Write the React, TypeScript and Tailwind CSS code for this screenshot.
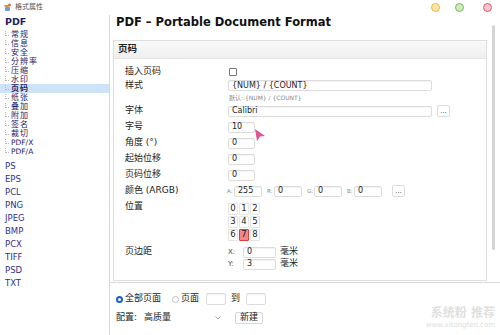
// Format properties dialog — PDF page-number settings.

const PDF_CHILDREN = ['常规', '信息', '安全', '分辨率', '压缩', '水印', '页码', '纸张', '叠加', '附加', '签名', '裁切', 'PDF/X', 'PDF/A'];
const FORMATS = ['PS', 'EPS', 'PCL', 'PNG', 'JPEG', 'BMP', 'PCX', 'TIFF', 'PSD', 'TXT'];

function Input({ value = '', className = '' }: { value?: string; className?: string }) {
  return (
    <div
      className={`h-[11px] border border-[#dcdcdc] rounded-[2px] bg-white shadow-[inset_0_1px_1px_rgba(0,0,0,0.05)] flex items-center pl-[3px] text-[8px] leading-none text-[#222] ${className}`}
    >
      {value}
    </div>
  );
}

function Dots() {
  return (
    <div className="w-[13px] h-[12px] border border-[#dcdcdc] rounded-[2px] bg-white flex items-center justify-center text-[7px] leading-none text-[#444]">
      ...
    </div>
  );
}

function Row({ label, h, children }: { label: string; h: string; children?: React.ReactNode }) {
  return (
    <div className={`flex items-center ${h}`}>
      <span className="w-[103px] shrink-0">{label}</span>
      {children}
    </div>
  );
}

export default function App() {
  return (
    <div className="w-[500px] h-[335px] bg-white relative overflow-hidden font-['DejaVu_Sans','Noto_Sans_CJK_SC',sans-serif] text-[#222]">
      {/* title bar */}
      <div className="h-[15px] flex items-center pl-[3px]">
        <svg width="9" height="9" viewBox="0 0 9 9">
          <path d="M1 2h4l1 2H2z" fill="#c9a13a" />
          <rect x="2" y="4" width="5" height="4" rx="1" fill="#7a9bd0" />
          <circle cx="6.5" cy="2" r="1.5" fill="#e06a3a" />
        </svg>
        <span className="ml-[3px] text-[7px] text-[#555]">格式属性</span>
        <span className="flex-1" />
        <span className="w-[9px] h-[9px] rounded-full bg-[#fbe6a8] border border-[#e2b84a]" />
        <span className="w-[9px] h-[9px] rounded-full bg-[#cfe8bf] border border-[#79b865] ml-[15px]" />
        <span className="w-[9px] h-[9px] rounded-full bg-[#f9c6cf] border border-[#e0536b] ml-[19px] mr-[8px]" />
      </div>

      <div className="flex h-[320px]">
        {/* tree */}
        <div className="w-[110px] shrink-0 border-r border-[#d9d9d9] text-[#1e2266]">
          <div className="h-[15px] flex items-center pl-[5px] text-[9.5px] font-bold">PDF</div>
          {PDF_CHILDREN.map((c) => (
            <div
              key={c}
              className={`h-[9px] flex items-center text-[8px] leading-none overflow-hidden ${c === '页码' ? 'bg-[#cfe3f8] font-bold' : ''}`}
            >
              <span className="w-[4px] h-[5px] ml-[5px] mr-[2px] border-l border-b border-dotted border-[#b8b8b8] -mt-[3px]" />
              <span className={c.startsWith('PDF') ? 'text-[7.5px]' : 'tracking-[1px]'}>{c}</span>
            </div>
          ))}
          <div className="mt-[4px]">
            {FORMATS.map((f) => (
              <div key={f} className="h-[13px] flex items-center pl-[5px] text-[8.5px] text-[#2d3190]">
                {f}
              </div>
            ))}
          </div>
        </div>

        {/* settings */}
        <div className="flex-1 flex flex-col">
          <div className="h-[268px] border-b border-[#d9d9d9] flex">
            <div className="flex-1">
              <div className="h-[25px] pl-[6px] text-[11.5px] leading-[14px] font-bold text-[#111]">
                PDF – Portable Document Format
              </div>
              <div className="ml-[3px] w-[374px] h-[241px] border border-[#dedede]">
                <div className="h-[18px] bg-gradient-to-b from-[#fafafa] to-[#efefef] border-b border-[#e6e6e6] flex items-center pl-[4px] text-[9.5px] font-bold">
                  页码
                </div>
                <div className="pl-[11px] pt-[6px] text-[9px]">
                  <Row label="插入页码" h="h-[14px]">
                    <span className="w-[8px] h-[8px] border border-[#777] rounded-[1px] bg-white ml-[1px]" />
                  </Row>
                  <Row label="样式" h="h-[13px]">
                    <Input value="{NUM} / {COUNT}" className="w-[204px]" />
                  </Row>
                  <div className="h-[11px] pl-[104px] text-[6px] text-[#888] flex items-center">默认: {'{NUM} / {COUNT}'}</div>
                  <Row label="字体" h="h-[16px]">
                    <Input value="Calibri" className="w-[204px]" />
                    <span className="ml-[5px]">
                      <Dots />
                    </span>
                  </Row>
                  <Row label="字号" h="h-[16px]">
                    <Input value="10" className="w-[27px]" />
                  </Row>
                  <Row label="角度 (°)" h="h-[16px]">
                    <Input value="0" className="w-[27px]" />
                  </Row>
                  <Row label="起始位移" h="h-[16px]">
                    <Input value="0" className="w-[27px]" />
                  </Row>
                  <Row label="页码位移" h="h-[16px]">
                    <Input value="0" className="w-[27px]" />
                  </Row>
                  <Row label="颜色 (ARGB)" h="h-[16px]">
                    <div className="flex items-center gap-[5px] -ml-[1px]">
                      {[
                        ['A:', '255'],
                        ['R:', '0'],
                        ['G:', '0'],
                        ['B:', '0'],
                      ].map(([l, v]) => (
                        <div key={l} className="flex items-center">
                          <span className="w-[7px] text-[5.5px] text-[#888]">{l}</span>
                          <Input value={v} className="w-[28px]" />
                        </div>
                      ))}
                      <span className="ml-[5px]">
                        <Dots />
                      </span>
                    </div>
                  </Row>
                  <div className="flex h-[47px]">
                    <span className="w-[103px] h-[16px] flex items-center">位置</span>
                    <div className="pt-[3px] grid grid-cols-[repeat(3,10px)] gap-x-[1px] auto-rows-[13px] text-[8.5px]">
                      {[0, 1, 2, 3, 4, 5, 6, 7, 8].map((n) => (
                        <div key={n} className="flex items-center justify-center">
                          <span
                            className={`w-[10px] h-[12px] rounded-[1px] flex items-center justify-center border ${
                              n === 7 ? 'bg-[#f08888] border-[#e23b3b]' : 'border-[#e4e4e4]'
                            }`}
                          >
                            {n}
                          </span>
                        </div>
                      ))}
                    </div>
                  </div>
                  <div className="flex">
                    <span className="w-[103px] h-[12px] flex items-center">页边距</span>
                    <div>
                      {[
                        ['X:', '0'],
                        ['Y:', '3'],
                      ].map(([l, v]) => (
                        <div key={l} className="h-[12px] flex items-center">
                          <span className="w-[15px] text-[7px] text-[#444]">{l}</span>
                          <Input value={v} className="w-[33px] h-[10px]" />
                          <span className="ml-[4px]">毫米</span>
                        </div>
                      ))}
                    </div>
                  </div>
                </div>
              </div>
            </div>
            {/* scrollbar */}
            <div className="w-[13px] pt-[10px] flex justify-center">
              <div className="w-[3px] h-[225px] bg-[#d4d4d4] rounded-full" />
            </div>
          </div>

          {/* bottom */}
          <div className="pl-[6px] pt-[9px] text-[9px]">
            <div className="h-[14px] flex items-center">
              <span className="w-[7px] h-[7px] rounded-full border-[2px] border-[#1f5fcf] bg-white" />
              <span className="ml-[2px]">全部页面</span>
              <span className="w-[7px] h-[7px] rounded-full border border-[#bdbdbd] ml-[11px]" />
              <span className="ml-[2px]">页面</span>
              <Input className="w-[20px] h-[12px] ml-[7px]" />
              <span className="ml-[5px]">到</span>
              <Input className="w-[20px] h-[12px] ml-[6px]" />
            </div>
            <div className="h-[20px] flex items-center mt-[2px]">
              <span>配置:</span>
              <div className="ml-[3px] w-[86px] h-[13px] flex items-center pl-[4px] pr-[5px]">
                <span className="flex-1">高质量</span>
                <svg width="6" height="4" viewBox="0 0 6 4">
                  <path d="M0.5 0.5 3 3 5.5 0.5" fill="none" stroke="#999" strokeWidth="0.9" />
                </svg>
              </div>
              <div className="ml-[9px] h-[12px] px-[4px] border border-[#d6d6d6] rounded-[2px] flex items-center">新建</div>
            </div>
          </div>
        </div>
      </div>

      {/* watermark */}
      <div className="absolute right-[5px] bottom-[6px] flex flex-col items-end leading-none text-[#e0e0e0]">
        <span className="text-[12px] font-bold">系统粉 推荐</span>
        <span className="text-[7px] mt-[3px]">www.xitongfen.com</span>
      </div>

      {/* pointer */}
      <svg className="absolute left-[254px] top-[128px]" width="12" height="14" viewBox="0 0 12 14">
        <path d="M1 1 L11 8 L6 8.5 L3 13 Z" fill="#e2558f" />
      </svg>
    </div>
  );
}
